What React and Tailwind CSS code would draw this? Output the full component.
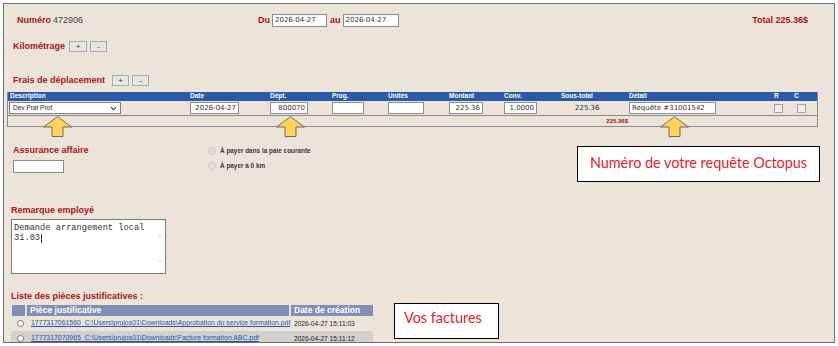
import { ChevronDown, ChevronUp } from "lucide-react"

const red = "text-[#a3141c]"

const Field = ({ value = "", className = "" }) => (
  <div
    className={`h-[12px] border border-[#8c8c8c] bg-white px-[2px] font-['DejaVu_Sans',Verdana,sans-serif] text-[7px] leading-[10px] text-[#333] whitespace-nowrap overflow-hidden ${className}`}
  >
    {value}
  </div>
)

const SmallButton = ({ label, className = "" }) => (
  <div
    className={`flex h-[11px] items-center justify-center border border-[#a9a9a9] bg-[#e6e6e6] text-[8px] leading-none text-[#333] ${className}`}
  >
    {label}
  </div>
)

const Arrow = ({ className }) => (
  <svg className={`absolute ${className}`} width="29" height="21" viewBox="0 0 29 21">
    <polygon
      points="14.5,0.6 28.4,11 20,11 20,20.5 9,20.5 9,11 0.6,11"
      fill="#fcd35c"
      stroke="#6e6a5f"
      strokeWidth="1"
    />
  </svg>
)

const Check = ({ className = "" }) => (
  <div className={`h-[9px] w-[9px] border border-[#a5a5a5] bg-[#efefef] ${className}`} />
)

const columns = "grid grid-cols-[180px_80px_62px_56px_61px_55px_57px_68px_145px_20px_22px] pl-[2px]"

const headers = ["Description", "Date", "Dépt.", "Prog.", "Unités", "Montant", "Conv.", "Sous-total", "Détail", "R", "C"]

const pieces = [
  {
    file: "1777317061560_C:\\Users\\prujos01\\Downloads\\Approbation du service formation.pdf",
    date: "2026-04-27 15:11:03",
    row: "bg-transparent",
  },
  {
    file: "1777317070965_C:\\Users\\prujos01\\Downloads\\Facture formation ABC.pdf",
    date: "2026-04-27 15:11:12",
    row: "bg-[#d3d0cc]",
  },
]

export default function App() {
  return (
    <div className="h-[346px] w-[838px] bg-white pl-[3px] pt-[3px]">
      <div className="relative h-[340px] w-[832px] overflow-hidden border border-[#6f6f6f] bg-[#ece4d9] font-['Liberation_Sans',Arial,sans-serif]">
        {/* header line */}
        <div className="mt-[10px] flex h-[13px] items-center">
          <div className="flex w-[254px] items-baseline pl-[13px]">
            <span className={`text-[9px] font-bold ${red}`}>Numéro</span>
            <span className="ml-[2px] text-[9px] text-[#444]">472906</span>
          </div>
          <span className={`text-[9px] font-bold ${red}`}>Du</span>
          <Field value="2026-04-27" className="ml-[2px] h-[13px] w-[55px] leading-[11px]" />
          <span className={`ml-[3px] text-[9px] font-bold ${red}`}>au</span>
          <Field value="2026-04-27" className="ml-[2px] h-[13px] w-[56px] leading-[11px]" />
          <div className="flex-1" />
          <span className={`pr-[26px] text-[9px] font-bold ${red}`}>Total 225.36$</span>
        </div>

        {/* kilométrage */}
        <div className="mt-[14px] flex h-[11px] items-center pl-[9px]">
          <span className={`text-[9px] font-bold ${red}`}>Kilométrage</span>
          <SmallButton label="+" className="ml-[4px] w-[18px]" />
          <SmallButton label="-" className="ml-[3px] w-[17px]" />
        </div>

        {/* frais */}
        <div className="mt-[23px] flex h-[11px] items-center pl-[9px]">
          <span className={`text-[9px] font-bold ${red}`}>Frais de déplacement</span>
          <SmallButton label="+" className="ml-[7px] w-[17px]" />
          <SmallButton label="-" className="ml-[3px] w-[17px]" />
        </div>

        <div className="ml-[3px] mt-[6px] w-[811px] border-x border-b border-[#8a8a8a]">
          <div className={`${columns} h-[9px] items-center bg-[#2c5aa6] text-[6.5px] font-bold leading-none text-white`}>
            {headers.map((h) => (
              <span key={h}>{h}</span>
            ))}
          </div>
          <div className={`${columns} h-[15px] items-center border-b border-[#8a8a8a]`}>
            <div className="-ml-[1px] flex h-[12px] w-[112px] items-center justify-between border border-[#7d7d7d] bg-white pl-[3px] pr-[2px] text-[6.5px] text-[#222]">
              <span>Dev Prat Prof.</span>
              <ChevronDown size={9} strokeWidth={2.8} className="text-[#333]" />
            </div>
            <Field value="2026-04-27" className="w-[49px] text-right" />
            <Field value="800070" className="w-[38px] text-right" />
            <Field className="w-[32px]" />
            <Field className="w-[36px]" />
            <Field value="225.36" className="w-[34px] text-right" />
            <Field value="1.0000" className="w-[33px] text-right" />
            <span className="pl-[14px] font-['DejaVu_Sans',Verdana,sans-serif] text-[7px] text-[#333]">225.36</span>
            <Field value="Requête #31001542" className="w-[87px]" />
            <Check />
            <Check className="ml-[3px]" />
          </div>
          <div className={`${columns} h-[10px] items-center`}>
            <span className={`col-span-8 pr-[1px] text-right text-[6px] font-bold ${red}`}>225.36$</span>
          </div>
        </div>

        <Arrow className="left-[39px] top-[112px]" />
        <Arrow className="left-[272px] top-[112px]" />
        <Arrow className="left-[656px] top-[112px]" />

        {/* assurance */}
        <div className="mt-[18px] flex">
          <div className="w-[204px] pl-[9px]">
            <div className={`h-[10px] text-[9px] font-bold leading-[10px] ${red}`}>Assurance affaire</div>
            <div className="mt-[5px] h-[13px] w-[51px] border border-[#8c8c8c] bg-white" />
          </div>
          <div className="flex flex-col gap-[6px] pt-[1px]">
            {["À payer dans la paie courante", "À payer à 0 km"].map((t) => (
              <div key={t} className="flex h-[9px] items-center">
                <div className="h-[8px] w-[8px] rounded-full border border-[#c9c9c9] bg-[#dedede]" />
                <span className="ml-[4px] text-[6.4px] font-bold text-[#3a3a3a]">{t}</span>
              </div>
            ))}
          </div>
        </div>

        {/* remarque */}
        <div className="mt-[32px] pl-[7px]">
          <div className={`h-[10px] text-[9px] font-bold leading-[10px] ${red}`}>Remarque employé</div>
          <div className="mt-[4px] flex h-[55px] w-[155px] border border-[#7d7d7d] bg-white">
            <div className="flex-1 pl-[2px] pt-[3px] font-['Liberation_Mono',monospace] text-[8.7px] leading-[10px] text-[#333]">
              <div>Demande arrangement local</div>
              <div className="flex items-center">
                31.03<span className="ml-[1px] inline-block h-[9px] w-px bg-[#333]" />
              </div>
            </div>
            <div className="flex w-[10px] flex-col items-center justify-between pb-[8px] pt-[12px] text-[#bdbdbd]">
              <ChevronUp size={8} strokeWidth={1.5} />
              <ChevronDown size={8} strokeWidth={1.5} />
            </div>
          </div>
        </div>

        {/* pièces */}
        <div className="mt-[17px] pl-[7px]">
          <div className={`h-[10px] text-[9px] font-bold leading-[10px] ${red}`}>Liste des pièces justificatives :</div>
          <div className="mt-[4px] w-[362px]">
            <div className="flex h-[11px] gap-[2px] bg-[#e6e0d8] pl-[1px] text-[8.5px] font-bold leading-[11px] text-white">
              <div className="w-[13px] bg-[#7f8fb6]" />
              <div className="w-[262px] bg-[#7f8fb6] pl-[3px]">Pièce justificative</div>
              <div className="flex-1 bg-[#7f8fb6] pl-[3px]">Date de création</div>
            </div>
            {pieces.map((p) => (
              <div key={p.file} className={`flex h-[15px] items-center ${p.row}`}>
                <div className="ml-[6px] h-[7px] w-[7px] rounded-full border border-[#777] bg-white" />
                <span className="ml-[7px] w-[260px] whitespace-nowrap text-[6.9px] text-[#1f55b5] underline">{p.file}</span>
                <span className="ml-[3px] whitespace-nowrap text-[6.6px] text-[#222]">{p.date}</span>
              </div>
            ))}
          </div>
        </div>

        {/* annotations */}
        <div className="absolute left-[573px] top-[142px] h-[36px] w-[243px] border border-black bg-white pt-[7px] text-center font-['Lato',sans-serif] text-[14.4px] leading-[18px] text-[#e0222b]">
          Numéro de votre requête Octopus
        </div>
        <div className="absolute left-[390px] top-[299px] h-[36px] w-[105px] border border-black bg-white pl-[9px] pt-[5px] font-['Lato',sans-serif] text-[14.4px] leading-[18px] text-[#e0222b]">
          Vos factures
        </div>
      </div>
    </div>
  )
}
